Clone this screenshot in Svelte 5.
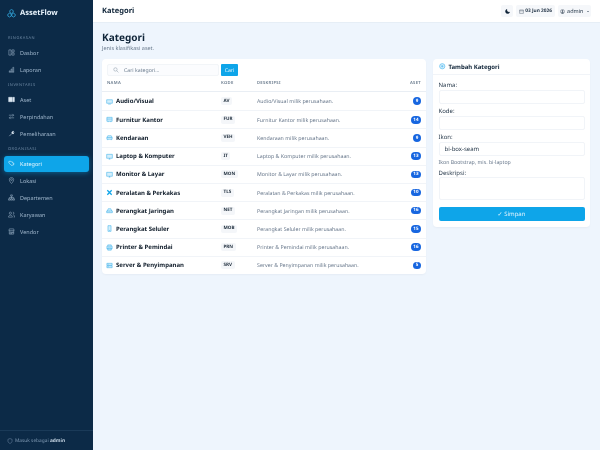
<script lang="ts">
	const nav = [
		{ title: 'RINGKASAN', items: [{ label: 'Dasbor', icon: 'grid' }, { label: 'Laporan', icon: 'bars' }] },
		{ title: 'INVENTARIS', items: [{ label: 'Aset', icon: 'laptop', solid: true }, { label: 'Perpindahan', icon: 'swap' }, { label: 'Pemeliharaan', icon: 'wrench', solid: true }] },
		{ title: 'ORGANISASI', items: [{ label: 'Kategori', icon: 'tags', active: true }, { label: 'Lokasi', icon: 'pin' }, { label: 'Departemen', icon: 'tree' }, { label: 'Karyawan', icon: 'people' }, { label: 'Vendor', icon: 'shop' }] }
	];

	const icons: Record<string, string> = {
		grid: 'M2 2h5v12H2zM9 2h5v5H9zM9 9h5v5H9z',
		bars: 'M2 14h12M3 14v-3h2v3M7 14V7h2v7M11 14V3h2v11',
		laptop: 'M1.500 3h8v10h-8zM11 3h3.500v10H11z',
		swap: 'M2 5h11M10 2l3 3-3 3M14 11H3M6 8l-3 3 3 3',
		wrench: 'M3 14l6-6M9 8a3.5 3.5 0 0 1 4-5l-2 2 1 2 2-1a3.5 3.5 0 0 1-5 2',
		tags: 'M2 3h5l6 6-4 4-7-6zM9 3l5 6-3 4',
		pin: 'M8 15s5-5 5-9A5 5 0 0 0 3 6c0 4 5 9 5 9zM8 8a2 2 0 1 0 0-4 2 2 0 0 0 0 4z',
		tree: 'M6 2h4v3H6zM1 11h4v3H1zM6 11h4v3H6zM11 11h4v3h-4zM8 5v6M3 11V8h10v3',
		people: 'M5.5 7.5a2.5 2.5 0 1 0 0-5 2.5 2.5 0 0 0 0 5zM11 7.5a2.5 2.5 0 1 0 0-5M1 14c0-6 9-6 9 0zM12 9c2 0 3 2 3 5h-2',
		shop: 'M2 6l1-4h10l1 4zM3 6v8h10V6M5 14v-5h3v5M10 9h2v2h-2z',
		tv: 'M1.5 4h13v8h-13zM5 14h6',
		cabinet: 'M2 3h12v9H2zM5 12v2M11 12v2M2 7h12',
		car: 'M2 8l2-4h8l2 4v4H2zM2 8h12M4 12v2M12 12v2',
		display: 'M1.5 3h13v9h-13zM6 14h4M8 12v2',
		tools: 'M3 3l10 10M13 3L3 13',
		router: 'M1.5 9h13v4h-13zM3 9l2-5h6l2 5M4 11h1M7 11h1',
		phone: 'M4.5 1.5h7v13h-7zM7 12.5h2',
		printer: 'M4 5V2h8v3M2 5h12v6H2zM4 9h8v5H4z',
		server: 'M2 3h12v4.5H2zM2 8.500h12V13H2zM4 5h2M4 10.500h2'
	};

	const categories = [
		{ name: 'Audio/Visual', code: 'AV', count: 9, icon: 'tv' },
		{ name: 'Furnitur Kantor', code: 'FUR', count: 14, icon: 'cabinet' },
		{ name: 'Kendaraan', code: 'VEH', count: 9, icon: 'car' },
		{ name: 'Laptop & Komputer', code: 'IT', count: 13, icon: 'display' },
		{ name: 'Monitor & Layar', code: 'MON', count: 13, icon: 'display' },
		{ name: 'Peralatan & Perkakas', code: 'TLS', count: 10, icon: 'tools' },
		{ name: 'Perangkat Jaringan', code: 'NET', count: 16, icon: 'router' },
		{ name: 'Perangkat Seluler', code: 'MOB', count: 15, icon: 'phone' },
		{ name: 'Printer & Pemindai', code: 'PRN', count: 16, icon: 'printer' },
		{ name: 'Server & Penyimpanan', code: 'SRV', count: 5, icon: 'server' }
	];
</script>

<div class="shell">
	<aside class="sidebar">
		<div class="brand">
			<svg class="logo" viewBox="0 0 16 16"><path d="M8 1l3 1.700v3.400L8 7.800 5 6.100V2.700zM4.500 7.500l3 1.700v3.400l-3 1.700-3-1.700V9.200zM11.500 7.500l3 1.700v3.400l-3 1.700-3-1.700V9.200z" /></svg>
			<span>AssetFlow</span>
		</div>
		<nav>
			{#each nav as group}
				<div class="section">{group.title}</div>
				{#each group.items as item}
					<div class="nav-item" class:active={item.active} class:solid={item.solid}>
						<svg viewBox="0 0 16 16"><path d={icons[item.icon]} /></svg>
						<span>{item.label}</span>
					</div>
				{/each}
			{/each}
		</nav>
		<div class="signed">
			<svg viewBox="0 0 16 16"><path d="M8 1.500l5.500 2v4.500c0 3-2.500 5.500-5.500 6.500C5 13.500 2.500 11 2.500 8V3.500z" /></svg>
			<span>Masuk sebagai <b>admin</b></span>
		</div>
	</aside>

	<div class="content">
		<header class="topbar">
			<span class="top-title">Kategori</span>
			<div class="top-actions">
				<span class="chip moon"><svg viewBox="0 0 16 16"><path d="M6 1a7 7 0 1 0 9 9A7.500 7.500 0 0 1 6 1z" /></svg></span>
				<span class="chip date">
					<svg viewBox="0 0 16 16"><path d="M2 3h12v11H2zM2 6h12" /></svg>
					03 Jun 2026
				</span>
				<span class="chip user">
					<svg viewBox="0 0 16 16"><circle cx="8" cy="8" r="6.500" /><circle class="solid" cx="8" cy="6.500" r="2.500" /><path class="solid" d="M3.500 12.500c1.500-3 7.500-3 9 0-2 2-7 2-9 0z" /></svg>
					admin
					<i class="caret"></i>
				</span>
			</div>
		</header>

		<main class="page">
			<h1>Kategori</h1>
			<p class="sub">Jenis klasifikasi aset.</p>

			<div class="columns">
				<section class="card list">
					<div class="search">
						<div class="search-box">
							<svg viewBox="0 0 16 16"><circle cx="6.500" cy="6.500" r="4.500" /><path d="M10 10l4.500 4.500" /></svg>
							<span>Cari kategori...</span>
						</div>
						<span class="search-btn">Cari</span>
					</div>
					<div class="row head">
						<span>NAMA</span>
						<span>KODE</span>
						<span>DESKRIPSI</span>
						<span class="right">ASET</span>
					</div>
					{#each categories as c}
						<div class="row">
							<span class="name" class:tools={c.icon === 'tools'}>
								<svg viewBox="0 0 16 16"><path d={icons[c.icon]} /></svg>
								{c.name}
							</span>
							<span class="cell"><em class="code">{c.code}</em></span>
							<span class="desc">{c.name} milik perusahaan.</span>
							<span class="cell right"><em class="count">{c.count}</em></span>
						</div>
					{/each}
				</section>

				<section class="card form">
					<h2>
						<svg viewBox="0 0 16 16"><circle cx="8" cy="8" r="6.500" /><path d="M8 5v6M5 8h6" /></svg>
						Tambah Kategori
					</h2>
					<div class="fields">
						<label for="nama">Nama:</label>
						<div class="input" id="nama"></div>
						<label for="kode">Kode:</label>
						<div class="input" id="kode"></div>
						<label for="ikon">Ikon:</label>
						<div class="input" id="ikon">bi-box-seam</div>
						<small>Ikon Bootstrap, mis. bi-laptop</small>
						<label class="after-hint" for="desk">Deskripsi:</label>
						<div class="input area" id="desk"></div>
						<div class="save">✓ Simpan</div>
					</div>
				</section>
			</div>
		</main>
	</div>
</div>

<style>
	:global(body) {
		margin: 0;
		font-family: 'Noto Sans', sans-serif;
		text-rendering: geometricPrecision;
	}

	.shell {
		display: flex;
		width: 600px;
		height: 450px;
		overflow: hidden;
		background: #eef5fd;
		will-change: transform;
	}

	svg {
		fill: none;
		stroke: currentColor;
		stroke-width: 1.2;
		flex-shrink: 0;
	}

	.sidebar {
		width: 93px;
		background: #0c2a47;
		display: flex;
		flex-direction: column;
		flex-shrink: 0;
	}
	.brand {
		height: 26px;
		display: flex;
		align-items: center;
		gap: 4px;
		padding-left: 7px;
		color: #e8f3fc;
		font-size: 7.500px;
		font-weight: 700;
	}
	.logo {
		width: 9px;
		height: 9px;
		color: #38bdf8;
	}
	nav {
		flex: 1;
		padding: 4.500px 4px 0;
	}
	.section {
		height: 12px;
		line-height: 12px;
		margin-top: 2.500px;
		padding-left: 4px;
		font-size: 4px;
		letter-spacing: 0.5px;
		color: #6f8aa5;
	}
	.nav-item {
		height: 15.500px;
		margin-bottom: 1.500px;
		display: flex;
		align-items: center;
		gap: 5px;
		padding-left: 4px;
		border-radius: 3px;
		font-size: 5.500px;
		color: #9fb6cc;
	}
	.nav-item svg {
		width: 7px;
		height: 7px;
	}
	.nav-item.solid svg {
		color: #dbe7f1;
		fill: #dbe7f1;
	}
	.nav-item.active {
		background: #0ea5e9;
		color: #e6f6fe;
		box-shadow: 0 1px 5px rgba(14, 165, 233, 0.45);
	}
	.signed {
		height: 19px;
		border-top: 1px solid #1a3a58;
		display: flex;
		align-items: center;
		gap: 2px;
		padding-left: 7px;
		font-size: 4.800px;
		color: #7f99b3;
	}
	.signed svg {
		width: 6px;
		height: 6px;
	}
	.signed b {
		color: #c4d4e3;
	}

	.content {
		flex: 1;
		min-width: 0;
	}
	.topbar {
		height: 23px;
		background: #fff;
		display: flex;
		align-items: center;
		justify-content: space-between;
		padding: 0 9px;
		box-sizing: border-box;
		border-bottom: 1px solid #e6eef6;
	}
	.top-title {
		font-size: 7.500px;
		font-weight: 700;
		color: #0f2438;
	}
	.top-actions {
		display: flex;
		gap: 3px;
	}
	.chip {
		height: 11.500px;
		display: flex;
		align-items: center;
		gap: 1.500px;
		padding: 0 2.500px;
		border-radius: 2px;
		background: #f5f7fa;
		font-size: 4.800px;
		color: #27384a;
		white-space: nowrap;
	}
	.chip svg {
		width: 5px;
		height: 5px;
	}
	.chip.moon {
		width: 7px;
		justify-content: center;
		color: #0f2438;
	}
	.chip.moon path {
		fill: currentColor;
	}
	.chip.date {
		font-weight: 700;
	}
	.chip.user {
		font-size: 5.500px;
		gap: 2px;
	}
	.chip.user .solid {
		fill: currentColor;
		stroke: none;
	}
	.caret {
		width: 0;
		height: 0;
		margin-left: 1px;
		border: 1.500px solid transparent;
		border-top-color: currentColor;
		border-bottom: 0;
	}

	.page {
		padding: 8px 10px 0 9px;
	}
	h1 {
		margin: 0;
		font-size: 10px;
		line-height: 13px;
		font-weight: 700;
		color: #0f2438;
	}
	.sub {
		margin: 0 0 7px;
		font-size: 5.500px;
		line-height: 8px;
		color: #6b7c8e;
	}
	.columns {
		display: grid;
		grid-template-columns: 324px 157px;
		gap: 7px;
		align-items: start;
	}
	.card {
		background: #fff;
		border-radius: 4px;
		box-shadow: 0 1px 2px rgba(15, 36, 56, 0.04);
	}

	.search {
		height: 17px;
		display: flex;
		align-items: flex-end;
		gap: 2px;
		padding-left: 5px;
	}
	.search-box {
		width: 112px;
		height: 12px;
		display: flex;
		align-items: center;
		gap: 5px;
		padding-left: 5px;
		box-sizing: border-box;
		border-radius: 2px;
		background: #fbfcfe;
		border: 1px solid #f2f5f8;
		font-size: 5.200px;
		color: #6b7c8e;
	}
	.search-box svg {
		width: 6px;
		height: 6px;
		color: #7c8b9a;
	}
	.search-btn {
		width: 17px;
		height: 12px;
		line-height: 12px;
		text-align: center;
		border-radius: 1px;
		background: #0ea5e9;
		color: #e6f6fe;
		font-size: 5.200px;
	}

	.row {
		height: 18.200px;
		display: grid;
		grid-template-columns: 115px 36px 1fr 30px;
		align-items: center;
		padding: 0 5px 0 4px;
		box-sizing: border-box;
		border-top: 1px solid #f1f4f8;
	}
	.row.head {
		height: 16px;
		margin-top: 0;
		padding-left: 5px;
		grid-template-columns: 114px 36px 1fr 30px;
		border-top: 0;
		border-bottom: 1px solid #e9eef4;
		font-size: 4.200px;
		font-weight: 600;
		letter-spacing: 0.3px;
		color: #6b7c8e;
	}
	.row.head + .row {
		border-top: 0;
	}
	.right {
		text-align: right;
	}
	.cell {
		display: flex;
	}
	.cell.right {
		justify-content: flex-end;
	}
	.name {
		display: flex;
		align-items: center;
		gap: 3px;
		font-size: 6px;
		font-weight: 700;
		color: #0f1c2a;
		white-space: nowrap;
	}
	.name svg {
		width: 7px;
		height: 7px;
		fill: #d4effc;
		color: #38aeea;
	}
	.name.tools svg {
		stroke-width: 3;
		color: #0ea5e9;
	}
	.code {
		padding: 1.500px 2.500px;
		border-radius: 2px;
		background: #f4f6f9;
		font-style: normal;
		font-size: 4.600px;
		line-height: 5px;
		font-weight: 700;
		color: #1e2d3c;
	}
	.desc {
		font-size: 5.250px;
		color: #66768a;
		white-space: nowrap;
	}
	.count {
		min-width: 3px;
		padding: 1.500px 2.500px;
		border-radius: 4px;
		background: #1766e0;
		font-style: normal;
		font-size: 4.500px;
		line-height: 4.500px;
		font-weight: 700;
		color: #fff;
		text-align: center;
	}

	h2 {
		margin: 0;
		height: 15px;
		display: flex;
		align-items: center;
		gap: 3px;
		padding-left: 6px;
		border-bottom: 1px solid #f1f4f8;
		font-size: 6px;
		font-weight: 700;
		color: #0f2438;
	}
	h2 svg {
		width: 6.500px;
		height: 6.500px;
		fill: #d4effc;
		color: #29a9ec;
	}
	.fields {
		padding: 6px 5.500px 6px;
		display: flex;
		flex-direction: column;
	}
	label {
		font-size: 6px;
		line-height: 8px;
		color: #26384a;
		margin-top: 1.500px;
	}
	.fields label:first-child {
		margin-top: 0;
	}
	.fields label.after-hint {
		margin-top: 3px;
	}
	.input {
		height: 14.500px;
		margin: 0.500px 0 1.500px;
		padding-left: 5px;
		box-sizing: border-box;
		background: #fff;
		border: 1px solid #f1f4f8;
		border-radius: 2px;
		font-size: 6px;
		line-height: 12.500px;
		color: #26384a;
	}
	.input.area {
		height: 23px;
		margin-bottom: 6.500px;
	}
	small {
		font-size: 5.200px;
		line-height: 8px;
		color: #66768a;
	}
	.save {
		height: 14px;
		line-height: 14px;
		text-align: center;
		border-radius: 2px;
		background: #0ea5e9;
		color: #e6f6fe;
		font-size: 6px;
	}
</style>
